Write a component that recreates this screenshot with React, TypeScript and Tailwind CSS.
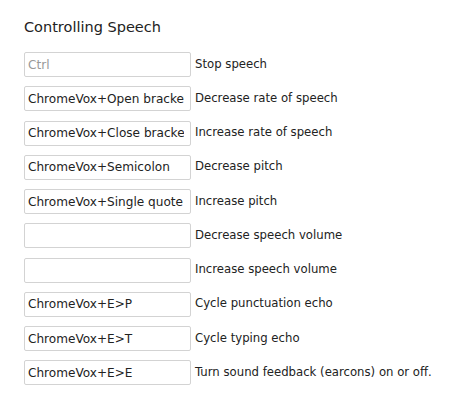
const rows: { key: string; label: string; placeholder?: boolean }[] = [
  { key: "Ctrl", label: "Stop speech", placeholder: true },
  { key: "ChromeVox+Open bracket", label: "Decrease rate of speech" },
  { key: "ChromeVox+Close bracket", label: "Increase rate of speech" },
  { key: "ChromeVox+Semicolon", label: "Decrease pitch" },
  { key: "ChromeVox+Single quote", label: "Increase pitch" },
  { key: "", label: "Decrease speech volume" },
  { key: "", label: "Increase speech volume" },
  { key: "ChromeVox+E>P", label: "Cycle punctuation echo" },
  { key: "ChromeVox+E>T", label: "Cycle typing echo" },
  { key: "ChromeVox+E>E", label: "Turn sound feedback (earcons) on or off." },
];

export default function App() {
  return (
    <div className="w-[462px] h-[400px] bg-white pl-6 pt-[17px] font-['DejaVu_Sans',sans-serif] text-[#222]">
      <h2 className="text-[14.5px] leading-[20px] font-normal">Controlling Speech</h2>
      <div className="mt-[15px] flex flex-col gap-[9.25px]">
        {rows.map((r) => (
          <div key={r.label} className="flex items-center gap-[4px]">
            <input
              readOnly
              value={r.placeholder ? "" : r.key}
              placeholder={r.placeholder ? r.key : ""}
              className="w-[167px] h-[25px] border border-[#d3d3d3] rounded-[2px] pl-[3px] pr-[6px] text-[12.1px] text-[#222] placeholder:text-[#999] outline-none"
            />
            <span className="text-[11.7px]">{r.label}</span>
          </div>
        ))}
      </div>
    </div>
  );
}
